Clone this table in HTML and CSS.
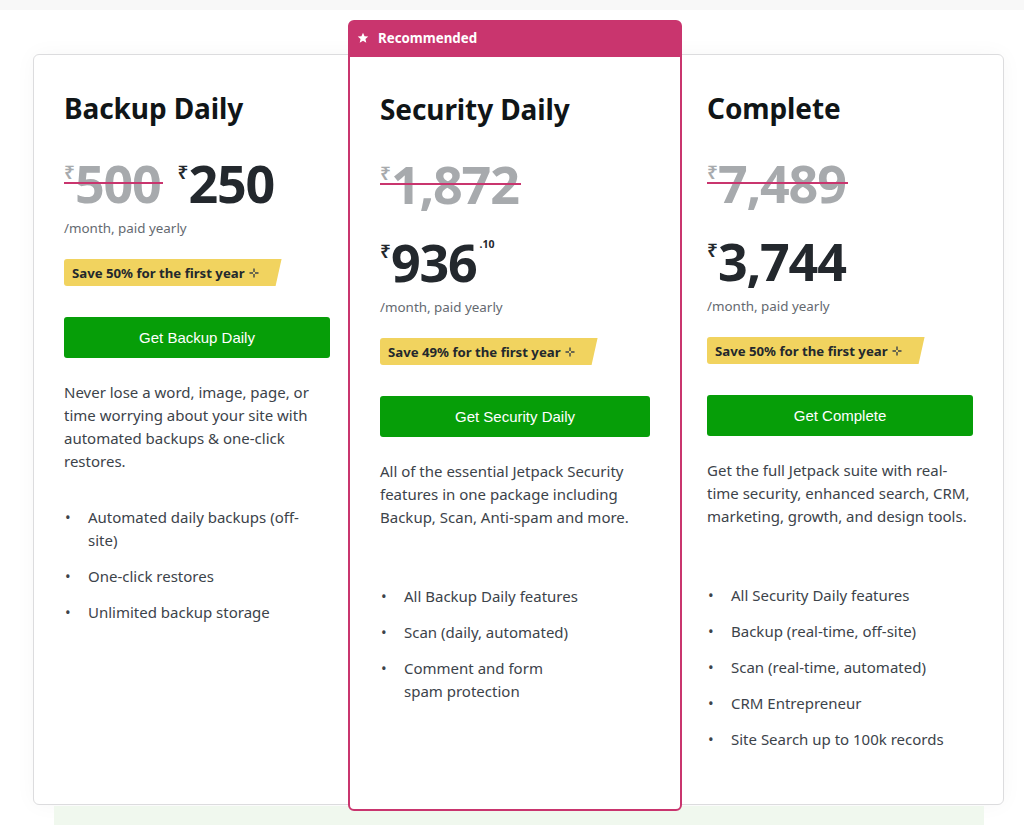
FILE: index.html
```html
<!DOCTYPE html>
<html lang="en">
<head>
<meta charset="utf-8">
<title>Jetpack plans</title>
<link rel="stylesheet" href="styles.css">
</head>
<body>
<div class="topstrip"></div>
<div class="page">
  <div class="plans">
    <section class="plan plan-left">
      <h2 class="title">Backup Daily</h2>
      <div class="prices">
        <span class="price old"><span class="cur">₹</span><span class="amt">500</span></span>
        <span class="price new"><span class="cur">₹</span><span class="amt">250</span></span>
      </div>
      <p class="period">/month, paid yearly</p>
      <div class="badge">Save 50% for the first year <svg class="plus" viewBox="0 0 10 10" width="10" height="10"><path d="M5 0.5V4M5 6V9.5M0.5 5H4M6 5H9.5" stroke="#3c434a" stroke-width="1.4" fill="none"/></svg></div>
      <button class="cta">Get Backup Daily</button>
      <p class="desc">Never lose a word, image, page, or time worrying about your site with automated backups &amp; one-click restores.</p>
      <ul class="features">
        <li>Automated daily backups (off-site)</li>
        <li>One-click restores</li>
        <li>Unlimited backup storage</li>
      </ul>
    </section>

    <section class="plan plan-mid">
      <div class="rec"><svg class="star" viewBox="0 0 24 24" width="12" height="12"><path d="M12 1.5l3.1 7 7.4.6-5.6 4.9 1.7 7.3L12 17.4l-6.6 3.9 1.7-7.3L1.5 9.1l7.4-.6z" fill="#fff"/></svg><span>Recommended</span></div>
      <div class="plan-body">
        <h2 class="title">Security Daily</h2>
        <div class="prices stack">
          <span class="price old"><span class="cur">₹</span><span class="amt">1,872</span></span>
          <span class="price new"><span class="cur">₹</span><span class="amt">936</span><span class="cents">.10</span></span>
        </div>
        <p class="period">/month, paid yearly</p>
        <div class="badge">Save 49% for the first year <svg class="plus" viewBox="0 0 10 10" width="10" height="10"><path d="M5 0.5V4M5 6V9.5M0.5 5H4M6 5H9.5" stroke="#3c434a" stroke-width="1.4" fill="none"/></svg></div>
        <button class="cta">Get Security Daily</button>
        <p class="desc">All of the essential Jetpack Security features in one package including Backup, Scan, Anti-spam and more.</p>
        <ul class="features">
          <li>All Backup Daily features</li>
          <li>Scan (daily, automated)</li>
          <li>Comment and form<br>spam protection</li>
        </ul>
      </div>
    </section>

    <section class="plan plan-right">
      <h2 class="title">Complete</h2>
      <div class="prices stack">
        <span class="price old"><span class="cur">₹</span><span class="amt">7,489</span></span>
        <span class="price new"><span class="cur">₹</span><span class="amt">3,744</span></span>
      </div>
      <p class="period">/month, paid yearly</p>
      <div class="badge">Save 50% for the first year <svg class="plus" viewBox="0 0 10 10" width="10" height="10"><path d="M5 0.5V4M5 6V9.5M0.5 5H4M6 5H9.5" stroke="#3c434a" stroke-width="1.4" fill="none"/></svg></div>
      <button class="cta">Get Complete</button>
      <p class="desc">Get the full Jetpack suite with real-time security, enhanced search, CRM, marketing, growth, and design tools.</p>
      <ul class="features">
        <li>All Security Daily features</li>
        <li>Backup (real-time, off-site)</li>
        <li>Scan (real-time, automated)</li>
        <li>CRM Entrepreneur</li>
        <li>Site Search up to 100k records</li>
      </ul>
    </section>
  </div>
  <div class="next-section"></div>
</div>
</body>
</html>
```

FILE: styles.css
```css
* { box-sizing: border-box; }
html, body { margin: 0; padding: 0; background: #fff; }
body {
  font-family: "Noto Sans", "Open Sans", sans-serif;
  color: #1d2327;
  overflow: hidden;
  height: 825px;
}
.topstrip {
  height: 10px;
  background: #f8f8f8;
}
.page {
  padding: 44px 20px 0 33px;
}
.plans {
  display: flex;
  align-items: stretch;
  width: 971px;
  height: 751px;
  border: 1px solid #dcdcde;
  border-radius: 6px;
  background: #fff;
  box-shadow: 0 0 22px rgba(0, 0, 0, 0.035);
}
.plan { display: flex; flex-direction: column; }
.plan-left { width: 314px; padding: 36px 18px 0 30px; }
.plan-right { width: 321px; padding: 36px 30px 0 25px; }
.plan-mid {
  width: 334px;
  margin: -35px 0 -7px;
  border: 2px solid #c9356e;
  border-radius: 6px;
  background: #fff;
  position: relative;
}
.rec {
  height: 35px;
  background: #c9356e;
  color: #fff;
  font-size: 13.3px;
  font-weight: 700;
  display: flex;
  align-items: center;
  gap: 9px;
  padding: 0 0 4px 8px;
  margin: 0 -1px;
  border-radius: 3px 3px 0 0;
}
.rec .star { display: block; width: 12px; height: 12px; }
.plan-body { padding: 35px 30px 0; }

.title {
  margin: 0;
  font-size: 28px;
  line-height: 34px;
  font-weight: 700;
  color: #101517;
  letter-spacing: -0.1px;
}
.prices {
  display: flex;
  flex-wrap: wrap;
  column-gap: 17px;
  row-gap: 26px;
  margin-top: 32px;
}
.prices.stack { flex-direction: column; align-items: flex-start; }
.price {
  display: inline-flex;
  align-items: flex-start;
  position: relative;
}
.cur {
  font-size: 19px;
  line-height: 19px;
  font-weight: 600;
  margin-top: 6px;
  margin-right: 0;
}
.amt {
  font-size: 52px;
  line-height: 52px;
  font-weight: 700;
  letter-spacing: -1.2px;
}
.cents {
  font-size: 10.5px;
  line-height: 10px;
  font-weight: 700;
  margin-top: 3px;
  margin-left: 3px;
}
.old { color: #a7aaad; }
.old::after {
  content: "";
  position: absolute;
  left: 0;
  right: -2px;
  top: 25px;
  height: 2px;
  background: #c9356e;
}
.new { color: #23282d; }
.period {
  margin: 9px 0 0;
  font-size: 13.4px;
  line-height: 20px;
  color: #646970;
}
.badge {
  align-self: flex-start;
  margin-top: 21px;
  height: 27px;
  display: inline-flex;
  align-items: center;
  gap: 4px;
  padding: 0 23px 0 8px;
  background: #f1d35f;
  font-size: 13.2px;
  font-weight: 700;
  color: #23282d;
  border-radius: 3px 0 0 3px;
  clip-path: polygon(0 0, 100% 0, calc(100% - 6px) 100%, 0 100%);
}
.plan-mid .badge { display: flex; width: max-content; }
.plus { display: block; margin-top: 1px; }
.cta {
  display: block;
  width: 100%;
  margin-top: 31px;
  height: 41px;
  border: 0;
  border-radius: 3px;
  background: #069e08;
  color: #fff;
  font-family: "Liberation Sans", Arial, sans-serif;
  font-size: 15px;
  cursor: pointer;
}
.desc {
  margin: 23px 0 0;
  min-height: 92px;
  font-size: 15px;
  line-height: 23px;
  color: #3c434a;
}
.features {
  list-style: none;
  margin: 33px 0 0;
  padding: 0 20px 0 0;
  display: flex;
  flex-direction: column;
  gap: 13px;
}
.features li {
  display: flex;
  font-size: 15px;
  line-height: 23px;
  color: #3c434a;
}
.features li::before {
  content: "•";
  flex: 0 0 23px;
  padding-left: 1px;
  color: #3c434a;
}
.next-section {
  margin: 1px 0 0 21px;
  width: 930px;
  height: 40px;
  background: #f0f8ee;
}
```
